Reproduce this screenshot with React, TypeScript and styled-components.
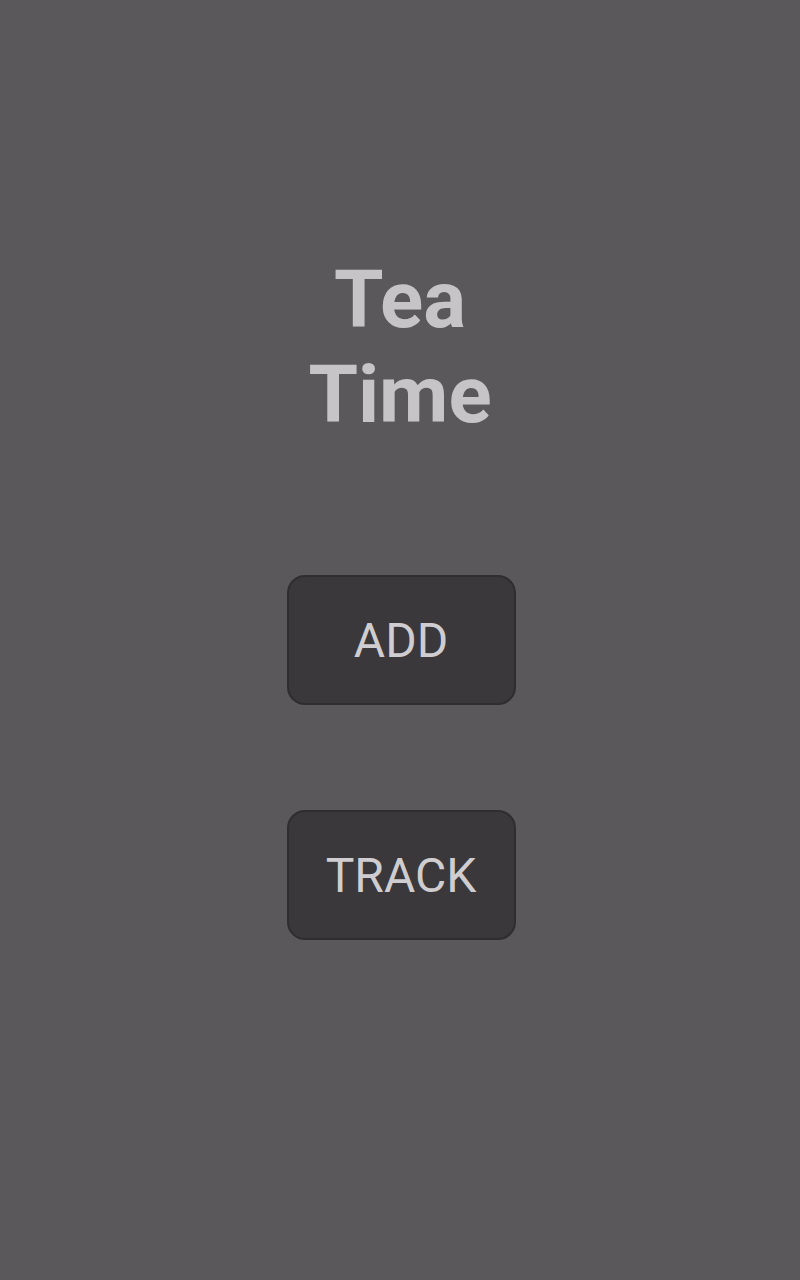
import React from "react";
import styled, { createGlobalStyle } from "styled-components";

const Global = createGlobalStyle`
  html, body { margin: 0; padding: 0; background: #5a585b; }
  body { font-family: Roboto, "Liberation Sans", sans-serif; }
`;

const Screen = styled.div`
  width: 800px;
  height: 1280px;
  background: #5a585b;
  display: flex;
  flex-direction: column;
  align-items: center;
  padding-top: 253px;
  box-sizing: border-box;
`;

const Title = styled.h1`
  margin: 0 0 132px;
  font-family: Roboto, "Liberation Sans", sans-serif;
  font-weight: 700;
  font-size: 80px;
  line-height: 95px;
  color: #c6c4c7;
  text-align: center;
`;

const Actions = styled.div`
  display: flex;
  flex-direction: column;
  gap: 105px;
  padding-left: 2px;
`;

const Button = styled.button`
  width: 229px;
  height: 130px;
  box-sizing: border-box;
  background: #3a383b;
  border: 2px solid #2f2d30;
  border-radius: 18px;
  color: #cfcdd0;
  font-family: Roboto, "Liberation Sans", sans-serif;
  font-size: 48px;
  font-weight: 400;
  display: flex;
  align-items: center;
  justify-content: center;
  padding: 0;
  cursor: pointer;
`;

export default function App() {
  return (
    <>
      <Global />
      <Screen>
        <Title>
          Tea
          <br />
          Time
        </Title>
        <Actions>
          <Button>ADD</Button>
          <Button>TRACK</Button>
        </Actions>
      </Screen>
    </>
  );
}
